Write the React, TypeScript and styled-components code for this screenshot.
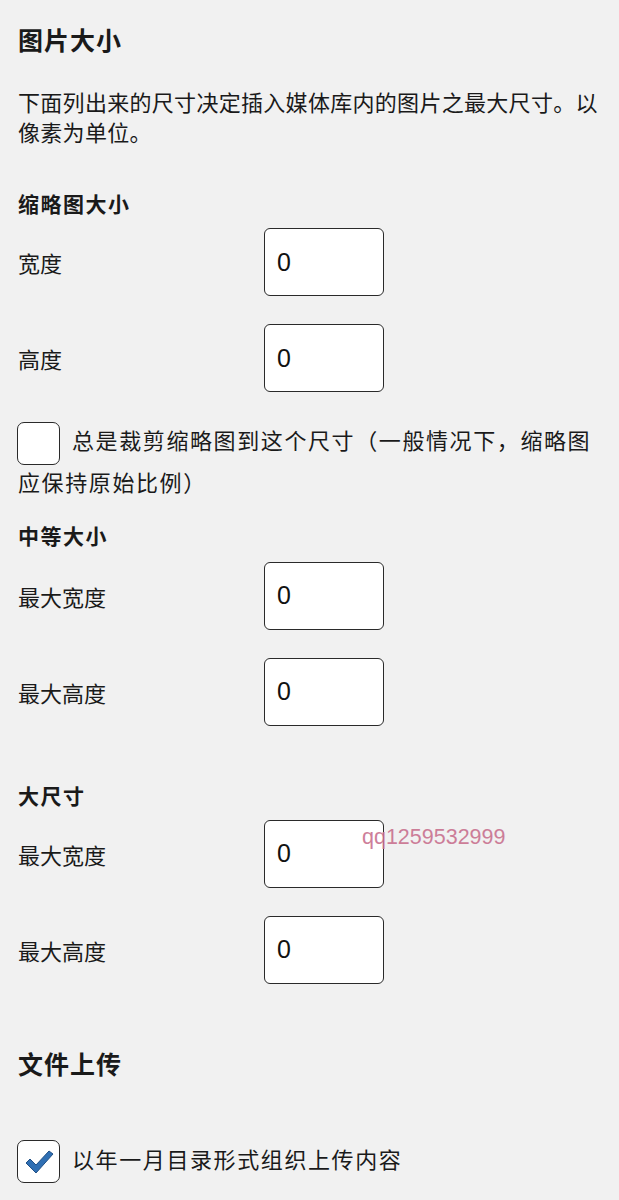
import React from 'react';
import styled, { createGlobalStyle } from 'styled-components';

const GlobalStyle = createGlobalStyle`
  html, body {
    margin: 0;
    padding: 0;
    background: #f1f1f1;
  }
  body {
    font-family: "Noto Sans CJK SC", "Liberation Sans", sans-serif;
    color: #1a1a1a;
  }
`;

const Page = styled.div`
  position: relative;
  width: 619px;
  min-height: 1200px;
  padding: 22px 18px 0;
  box-sizing: border-box;
  background: #f1f1f1;
`;

const Title = styled.h2<{ $top?: number }>`
  margin: ${p => p.$top ?? 0}px 0 0;
  font-size: 25px;
  line-height: 34px;
  font-weight: 700;
  letter-spacing: 1px;
`;

const Description = styled.p`
  margin: 30px 0 0;
  font-size: 22px;
  line-height: 30px;
  letter-spacing: 0.3px;
`;

const SubTitle = styled.h3<{ $top: number; $bottom?: number }>`
  margin: ${p => p.$top}px 0 ${p => p.$bottom ?? 12}px;
  font-size: 21px;
  line-height: 26px;
  font-weight: 700;
  letter-spacing: 1.5px;
`;

const Row = styled.div`
  display: flex;
  align-items: center;
  & + & {
    margin-top: 28px;
  }
`;

const Label = styled.label`
  width: 246px;
  font-size: 22px;
  line-height: 30px;
`;

const NumberInput = styled.input`
  box-sizing: border-box;
  width: 120px;
  height: 68px;
  padding: 0 12px;
  border: 1.5px solid #2a2a2a;
  border-radius: 6px;
  background: #fff;
  font-family: "Liberation Sans", Arial, sans-serif;
  font-size: 25px;
  color: #111;
  outline: none;
`;

const CheckParagraph = styled.p<{ $top: number }>`
  margin: ${p => p.$top}px 0 0;
  font-size: 22px;
  line-height: 38px;
  letter-spacing: 1.6px;
`;

const Box = styled.span`
  display: inline-flex;
  align-items: center;
  justify-content: center;
  box-sizing: border-box;
  width: 43px;
  height: 43px;
  margin: -3px 12px -3px -1px;
  vertical-align: middle;
  border: 1.5px solid #2a2a2a;
  border-radius: 7px;
  background: #fff;
`;

const Watermark = styled.span`
  position: absolute;
  left: 362px;
  top: 825px;
  font-family: "Liberation Sans", Arial, sans-serif;
  font-size: 21.5px;
  color: #c9718f;
  opacity: 0.9;
`;

const Check = () => (
  <svg width="30" height="26" viewBox="0 0 30 26">
    <path
      d="M2 14 L6 10 L12 16 L25 2 L29 5 L12 24 Z"
      fill="#2f6fb3"
      stroke="#1f4f86"
      strokeWidth="1"
      strokeLinejoin="round"
    />
  </svg>
);

const sizeRows = (labels: string[], group: string) =>
  labels.map(l => (
    <Row key={group + l}>
      <Label>{l}</Label>
      <NumberInput defaultValue="0" />
    </Row>
  ));

const App: React.FC = () => {
  return (
    <Page>
      <GlobalStyle />
      <Title>图片大小</Title>
      <Description>
        下面列出来的尺寸决定插入媒体库内的图片之最大尺寸。以像素为单位。
      </Description>

      <SubTitle $top={44}>缩略图大小</SubTitle>
      {sizeRows(['宽度', '高度'], 'thumb')}
      <CheckParagraph $top={28}>
        <Box />
        总是裁剪缩略图到这个尺寸（一般情况下，缩略图应保持原始比例）
      </CheckParagraph>

      <SubTitle $top={22} $bottom={14}>中等大小</SubTitle>
      {sizeRows(['最大宽度', '最大高度'], 'medium')}

      <SubTitle $top={56}>大尺寸</SubTitle>
      {sizeRows(['最大宽度', '最大高度'], 'large')}

      <Title $top={62}>文件上传</Title>
      <CheckParagraph $top={59}>
        <Box>
          <Check />
        </Box>
        以年一月目录形式组织上传内容
      </CheckParagraph>

      <Watermark>qq1259532999</Watermark>
    </Page>
  );
};

export default App;
